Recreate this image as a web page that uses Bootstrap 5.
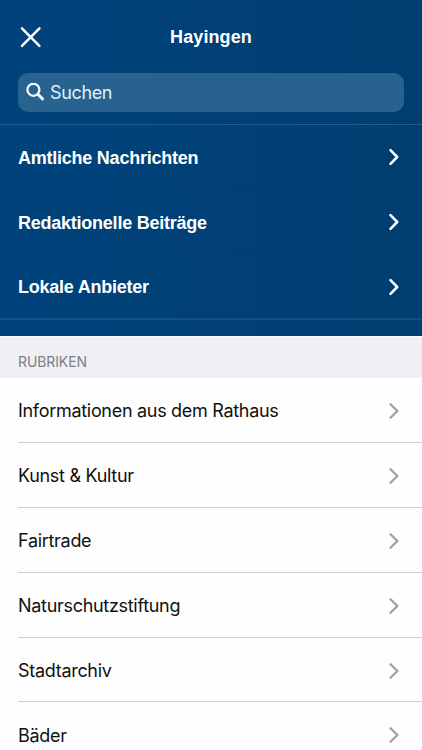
<!DOCTYPE html>
<html lang="de">
<head>
<meta charset="utf-8">
<meta name="viewport" content="width=device-width, initial-scale=1">
<title>Hayingen</title>
<link rel="stylesheet" href="https://cdn.jsdelivr.net/npm/bootstrap@5.3.0/dist/css/bootstrap.min.css">
<style>
body{font-family:Inter,"Liberation Sans",sans-serif;height:750px;color:#111;background:#fefefe}
svg{display:block;flex:none;fill:none;stroke:currentColor;stroke-linecap:round;stroke-linejoin:round}
.menu-top{height:336px;background:linear-gradient(90deg,#00437c,#003e71)}
.title-bar{height:73px;padding-left:20px}
.app-title{font-family:"Liberation Sans",Arial,sans-serif;font-size:18px;line-height:24px;letter-spacing:.1px}
.close-btn{width:22px;height:22px;z-index:2}
.search-box{height:39px;margin:0 18px;padding-left:8px;gap:5px;border-radius:10px;background:#28638f;color:#dff2fc;font-size:18px}
.search-box svg{color:#f0faff}
.search-box input::placeholder{color:#dff2fc;opacity:1}
.search-box input{color:#fff;outline:0;letter-spacing:-.35px}
.main-links{margin-top:12px;border-top:1px solid #245d8d;border-bottom:2px solid #124f82;height:196px}
.main-links a{height:64.6px;padding:0 22px 0 18px;font-family:"Liberation Sans",Arial,sans-serif;font-size:18px;letter-spacing:-.24px}
.main-links span{padding-top:2px}
.main-links a+a{border-top:1px solid #003d72}
.section-label{height:42px;padding:9px 0 0 18px;background:#eff0f5;color:#7d7e83;font-size:14px;letter-spacing:-.1px;border-top:1px solid #f8fafd}
.topics a{height:64.9px;margin-left:18px;padding-top:2px;padding-right:22px;font-size:18px;letter-spacing:-.3px;border-bottom:1px solid #d0d0d0}
.topics svg{color:#a0a0a0}
</style>
</head>
<body class="overflow-hidden">
<header class="menu-top text-white">
  <div class="title-bar d-flex align-items-center position-relative">
    <button class="close-btn btn p-0 border-0 text-white" aria-label="Schließen"><svg width="22" height="22" viewBox="0 0 22 22" stroke-width="2.5"><path d="M2 2.4 19.4 19.8M19.4 2.4 2 19.8"/></svg></button>
    <h1 class="app-title position-absolute start-0 w-100 text-center fw-bold m-0">Hayingen</h1>
  </div>
  <label class="search-box d-flex align-items-center">
    <svg width="19" height="19" viewBox="0 0 19 19" stroke-width="2.3"><circle cx="7.4" cy="6.8" r="6"/><path d="m12 11.4 4.5 4.5" stroke-width="2.9"/></svg>
    <input class="bg-transparent border-0 p-0 flex-grow-1" type="text" placeholder="Suchen">
  </label>
  <nav class="main-links">
    <a href="#" class="d-flex align-items-center justify-content-between text-white text-decoration-none fw-bold"><span>Amtliche Nachrichten</span><svg width="11" height="18" viewBox="0 0 11 18" stroke-width="2.5"><path d="M1.5 2.2 8.2 9 1.5 15.8"/></svg></a>
    <a href="#" class="d-flex align-items-center justify-content-between text-white text-decoration-none fw-bold"><span>Redaktionelle Beiträge</span><svg width="11" height="18" viewBox="0 0 11 18" stroke-width="2.5"><path d="M1.5 2.2 8.2 9 1.5 15.8"/></svg></a>
    <a href="#" class="d-flex align-items-center justify-content-between text-white text-decoration-none fw-bold"><span>Lokale Anbieter</span><svg width="11" height="18" viewBox="0 0 11 18" stroke-width="2.5"><path d="M1.5 2.2 8.2 9 1.5 15.8"/></svg></a>
  </nav>
</header>
<main>
  <h2 class="section-label d-flex align-items-center fw-normal m-0">RUBRIKEN</h2>
  <nav class="topics">
    <a href="#" class="d-flex align-items-center justify-content-between text-reset text-decoration-none"><span>Informationen aus dem Rathaus</span><svg width="11" height="18" viewBox="0 0 11 18" stroke-width="2.3"><path d="M1.5 2.2 8.4 9 1.5 15.8"/></svg></a>
    <a href="#" class="d-flex align-items-center justify-content-between text-reset text-decoration-none"><span>Kunst &amp; Kultur</span><svg width="11" height="18" viewBox="0 0 11 18" stroke-width="2.3"><path d="M1.5 2.2 8.4 9 1.5 15.8"/></svg></a>
    <a href="#" class="d-flex align-items-center justify-content-between text-reset text-decoration-none"><span>Fairtrade</span><svg width="11" height="18" viewBox="0 0 11 18" stroke-width="2.3"><path d="M1.5 2.2 8.4 9 1.5 15.8"/></svg></a>
    <a href="#" class="d-flex align-items-center justify-content-between text-reset text-decoration-none"><span>Naturschutzstiftung</span><svg width="11" height="18" viewBox="0 0 11 18" stroke-width="2.3"><path d="M1.5 2.2 8.4 9 1.5 15.8"/></svg></a>
    <a href="#" class="d-flex align-items-center justify-content-between text-reset text-decoration-none"><span>Stadtarchiv</span><svg width="11" height="18" viewBox="0 0 11 18" stroke-width="2.3"><path d="M1.5 2.2 8.4 9 1.5 15.8"/></svg></a>
    <a href="#" class="d-flex align-items-center justify-content-between text-reset text-decoration-none"><span>Bäder</span><svg width="11" height="18" viewBox="0 0 11 18" stroke-width="2.3"><path d="M1.5 2.2 8.4 9 1.5 15.8"/></svg></a>
  </nav>
</main>
<script src="https://cdn.jsdelivr.net/npm/bootstrap@5.3.0/dist/js/bootstrap.bundle.min.js"></script>
</body>
</html>
